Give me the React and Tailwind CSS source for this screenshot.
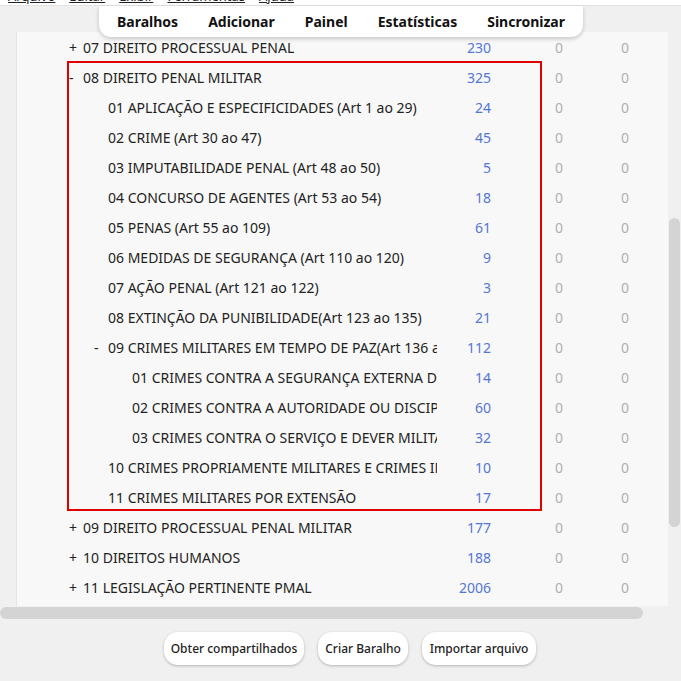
import React from "react";

const rows = [
  { sign: "+", level: 0, name: "07 DIREITO PROCESSUAL PENAL", count: 230 },
  { sign: "-", level: 0, name: "08 DIREITO PENAL MILITAR", count: 325 },
  { level: 1, name: "01 APLICAÇÃO E ESPECIFICIDADES (Art 1 ao 29)", count: 24 },
  { level: 1, name: "02 CRIME (Art 30 ao 47)", count: 45 },
  { level: 1, name: "03 IMPUTABILIDADE PENAL (Art 48 ao 50)", count: 5 },
  { level: 1, name: "04 CONCURSO DE AGENTES (Art 53 ao 54)", count: 18 },
  { level: 1, name: "05 PENAS (Art 55 ao 109)", count: 61 },
  { level: 1, name: "06 MEDIDAS DE SEGURANÇA (Art 110 ao 120)", count: 9 },
  { level: 1, name: "07 AÇÃO PENAL (Art 121 ao 122)", count: 3 },
  { level: 1, name: "08 EXTINÇÃO DA PUNIBILIDADE(Art 123 ao 135)", count: 21 },
  { sign: "-", level: 1, name: "09 CRIMES MILITARES EM TEMPO DE PAZ(Art 136 ao 354)", count: 112 },
  { level: 2, name: "01 CRIMES CONTRA A SEGURANÇA EXTERNA DO PAÍS", count: 14 },
  { level: 2, name: "02 CRIMES CONTRA A AUTORIDADE OU DISCIPLINA MILITAR", count: 60 },
  { level: 2, name: "03 CRIMES CONTRA O SERVIÇO E DEVER MILITAR", count: 32 },
  { level: 1, name: "10 CRIMES PROPRIAMENTE MILITARES E CRIMES IMPROPRIAMENTE MILITARES", count: 10 },
  { level: 1, name: "11 CRIMES MILITARES POR EXTENSÃO", count: 17 },
  { sign: "+", level: 0, name: "09 DIREITO PROCESSUAL PENAL MILITAR", count: 177 },
  { sign: "+", level: 0, name: "10 DIREITOS HUMANOS", count: 188 },
  { sign: "+", level: 0, name: "11 LEGISLAÇÃO PERTINENTE PMAL", count: 2006 },
];

const indent = ["pl-0", "pl-[25px]", "pl-[49px]"];

const DeckRow = ({ row }) => (
  <div className="flex h-[30px] items-center">
    <div className={`flex w-[371px] overflow-hidden whitespace-nowrap ${indent[row.level]}`}>
      <span className="w-[17px] shrink-0 pl-[3px]">{row.sign || ""}</span>
      <span>{row.name}</span>
    </div>
    <div className="w-[54px] text-right text-[#5476d6]">{row.count}</div>
    <div className="ml-[30px] w-[76px] text-center text-[#b0b0b0]">0</div>
    <div className="w-[56px] text-center text-[#b0b0b0]">0</div>
  </div>
);

export default function App() {
  return (
    <div
      className="relative h-[681px] w-[681px] overflow-hidden bg-[#f0f0f0] text-[14px] text-[#222]"
      style={{ fontFamily: '"Noto Sans", "Open Sans", sans-serif' }}
    >
      {/* menu bar, scrolled mostly off the top */}
      <div className="h-[6px] overflow-hidden border-b border-[#e2e2e2] bg-white">
        <div className="-mt-[13px] flex gap-[14px] pl-[8px] text-[13px] underline">
          <span>Arquivo</span>
          <span>Editar</span>
          <span>Exibir</span>
          <span>Ferramentas</span>
          <span>Ajuda</span>
        </div>
      </div>

      <div className="h-[26px]" />

      <div className="flex">
        <div className="ml-[16px] h-[574px] w-[652px] border-l border-[#e6e6e6] bg-[#f8f8f8] pl-[49px]">
          {rows.map((row, i) => (
            <DeckRow key={i} row={row} />
          ))}
        </div>
        <div className="ml-[1px] w-[12px] pt-[186px]">
          <div className="h-[309px] w-[11px] rounded-full bg-[#d4d4d4]" />
        </div>
      </div>

      {/* horizontal scrollbar */}
      <div className="mt-[1px] h-[12px] w-[643px] rounded-full bg-[#d4d4d4]" />

      <div className="mt-[13px] flex gap-[14px] pl-[164px] text-[12px] font-medium">
        <button className="h-[33px] w-[140px] rounded-[14px] bg-white shadow-[0_1px_3px_rgba(0,0,0,0.25)]">
          Obter compartilhados
        </button>
        <button className="h-[33px] w-[90px] rounded-[14px] bg-white shadow-[0_1px_3px_rgba(0,0,0,0.25)]">
          Criar Baralho
        </button>
        <button className="h-[33px] w-[114px] rounded-[14px] bg-white shadow-[0_1px_3px_rgba(0,0,0,0.25)]">
          Importar arquivo
        </button>
      </div>

      {/* floating toolbar */}
      <div className="absolute left-[99px] top-[6px] flex h-[31px] w-[484px] items-center gap-[30px] rounded-b-[12px] bg-white pl-[18px] text-[14px] font-bold text-[#111] shadow-[0_2px_4px_rgba(0,0,0,0.2)]">
        <span>Baralhos</span>
        <span>Adicionar</span>
        <span>Painel</span>
        <span>Estatísticas</span>
        <span>Sincronizar</span>
      </div>

      {/* red highlight annotation */}
      <div className="absolute left-[67px] top-[61px] h-[450px] w-[475px] border-2 border-[#e00000]" />
    </div>
  );
}
